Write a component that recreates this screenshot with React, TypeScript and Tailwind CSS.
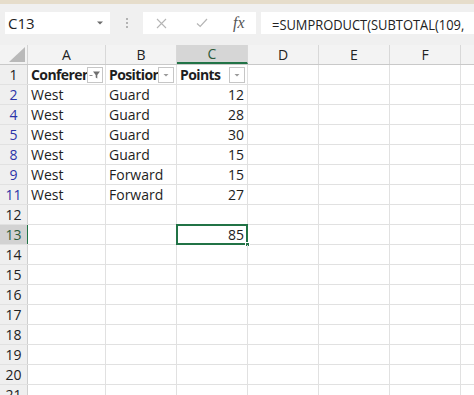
import React from "react";

const COLS = [
  { key: "A", w: 78 },
  { key: "B", w: 71 },
  { key: "C", w: 71 },
  { key: "D", w: 71 },
  { key: "E", w: 71 },
  { key: "F", w: 71 },
  { key: "G", w: 40 },
];

type Row = { n: number; filtered?: boolean; a?: string; b?: string; c?: string; sel?: boolean };

const ROWS: Row[] = [
  { n: 2, filtered: true, a: "West", b: "Guard", c: "12" },
  { n: 4, filtered: true, a: "West", b: "Guard", c: "28" },
  { n: 5, filtered: true, a: "West", b: "Guard", c: "30" },
  { n: 8, filtered: true, a: "West", b: "Guard", c: "15" },
  { n: 9, filtered: true, a: "West", b: "Forward", c: "15" },
  { n: 11, filtered: true, a: "West", b: "Forward", c: "27" },
  { n: 12 },
  { n: 13, c: "85", sel: true },
  { n: 14 },
  { n: 15 },
  { n: 16 },
  { n: 17 },
  { n: 18 },
  { n: 19 },
  { n: 20 },
  { n: 21 },
];

function DropBtn({ filter }: { filter?: boolean }) {
  return (
    <div className="w-[16px] h-[16px] shrink-0 mr-[2px] bg-white border border-[#c6c6c6] flex items-center justify-center">
      {filter ? (
        <svg width="12" height="10" viewBox="0 0 12 10">
          <path d="M0.5 5.5 L3.5 5.5" stroke="#8a8a8a" strokeWidth="1" />
          <path d="M4 1.5 L11 1.5 L8.3 5 L8.3 8.5 L6.7 7.5 L6.7 5 Z" fill="#6f6f6f" />
        </svg>
      ) : (
        <svg width="8" height="6" viewBox="0 0 8 6">
          <path d="M1.5 2 L6.5 2 L4 4.5 Z" fill="#9a9a9a" />
        </svg>
      )}
    </div>
  );
}

export default function App() {
  const font = { fontFamily: '"Open Sans", "Noto Sans", sans-serif' };
  return (
    <div className="w-[474px] h-[395px] overflow-hidden bg-white text-[#1e1e1e]" style={font}>
      {/* top strip */}
      <div className="h-[4px] bg-[#e6ddcb]" />
      {/* toolbar */}
      <div className="h-[41px] bg-[#f0f0f0] flex items-start pt-[8px] pl-[5px]">
        <div className="w-[105px] shrink-0 h-[22px] bg-white flex items-center pl-[3px] pr-[6px]">
          <span className="flex-1 text-[15px] leading-none text-[#222]">C13</span>
          <svg width="8" height="6" viewBox="0 0 8 6">
            <path d="M1 1.5 L7 1.5 L4 4.5 Z" fill="#6b6b6b" />
          </svg>
        </div>
        <div className="w-[33px] shrink-0 h-[22px] flex items-center justify-center">
          <div className="flex flex-col gap-[2px]">
            <div className="w-[2px] h-[2px] bg-[#b3b3b3]" />
            <div className="w-[2px] h-[2px] bg-[#b3b3b3]" />
            <div className="w-[2px] h-[2px] bg-[#b3b3b3]" />
          </div>
        </div>
        <div className="w-[113px] shrink-0 h-[22px] bg-white flex items-center">
          <svg className="ml-[13px]" width="11" height="11" viewBox="0 0 11 11">
            <path d="M1 1 L10 10 M10 1 L1 10" stroke="#b5b5b5" strokeWidth="1.1" />
          </svg>
          <svg className="ml-[29px]" width="12" height="10" viewBox="0 0 12 10">
            <path d="M1 5.5 L4.2 8.5 L11 1" stroke="#b5b5b5" strokeWidth="1.2" fill="none" />
          </svg>
          <span
            className="ml-[25px] text-[16px] leading-none italic text-[#555]"
            style={{ fontFamily: '"Liberation Serif", serif' }}
          >
            fx
          </span>
        </div>
        <div className="ml-[5px] flex-1 min-w-0 h-[22px] bg-white pl-[11px] overflow-hidden whitespace-nowrap">
          <span className="inline-block origin-left scale-x-[0.86] text-[15px] leading-[22px] text-[#222]">
            =SUMPRODUCT(SUBTOTAL(109,
          </span>
        </div>
      </div>
      {/* column header */}
      <div className="flex h-[20px] bg-[#f3f3f3] border-b border-[#c9c9c9]">
        <div className="w-[28px] shrink-0 border-r border-[#d4d4d4] flex items-end justify-end pr-[2px] pb-[2px]">
          <svg width="16" height="15" viewBox="0 0 16 15">
            <path d="M16 0 L16 15 L0 15 Z" fill="#b9b9b9" />
          </svg>
        </div>
        {COLS.map((c) => (
          <div
            key={c.key}
            style={{ width: c.w }}
            className={
              "shrink-0 border-r border-[#d8d8d8] flex items-center justify-center text-[14px] " +
              (c.key === "C" ? "bg-[#d6d6d6] border-b-2 border-b-[#217346] text-[#2d5b3a]" : "text-[#222]")
            }
          >
            {c.key !== "G" ? c.key : ""}
          </div>
        ))}
      </div>
      {/* header data row 1 */}
      <div className="flex h-[20px] border-b border-[#e1e1e1]">
        <div className="w-[28px] shrink-0 bg-[#efefef] border-r border-[#cfcfcf] flex items-center justify-center text-[14px] text-[#222]">
          1
        </div>
        <div className="w-[78px] shrink-0 border-r border-[#e1e1e1] flex items-center pl-[3px] font-bold tracking-[-0.6px] text-[14px]">
          <span className="flex-1 overflow-hidden whitespace-nowrap">Conference</span>
          <DropBtn filter />
        </div>
        <div className="w-[71px] shrink-0 border-r border-[#e1e1e1] flex items-center pl-[3px] font-bold tracking-[-0.6px] text-[14px]">
          <span className="flex-1 overflow-hidden whitespace-nowrap">Position</span>
          <DropBtn />
        </div>
        <div className="w-[71px] shrink-0 border-r border-[#e1e1e1] flex items-center pl-[3px] font-bold tracking-[-0.6px] text-[14px]">
          <span className="flex-1 overflow-hidden whitespace-nowrap">Points</span>
          <DropBtn />
        </div>
        {COLS.slice(3).map((c) => (
          <div key={c.key} style={{ width: c.w }} className="shrink-0 border-r border-[#e1e1e1]" />
        ))}
      </div>
      {ROWS.map((r) => (
        <div key={r.n} className="flex h-[20px] border-b border-[#e1e1e1]">
          <div
            className={
              "w-[28px] shrink-0 border-r flex items-center justify-center text-[14px] " +
              (r.sel
                ? "bg-[#d2d2d2] border-[#217346] text-[#2d5b3a]"
                : "bg-[#efefef] border-[#cfcfcf] " + (r.filtered ? "text-[#2b34a8]" : "text-[#222]"))
            }
          >
            {r.n}
          </div>
          <div className="w-[78px] shrink-0 border-r border-[#e1e1e1] flex items-center pl-[3px] text-[14px]">
            {r.a}
          </div>
          <div className="w-[71px] shrink-0 border-r border-[#e1e1e1] flex items-center pl-[3px] text-[14px]">
            {r.b}
          </div>
          <div className="w-[71px] shrink-0 border-r border-[#e1e1e1] relative flex items-center justify-end pr-[3px] text-[14px]">
            {r.c}
            {r.sel && (
              <>
                <div className="absolute left-[-1px] top-[-1px] right-[-1px] bottom-[-1px] border-2 border-[#217346]" />
                <div className="absolute right-[-3px] bottom-[-3px] w-[5px] h-[5px] bg-[#217346] border border-white" />
              </>
            )}
          </div>
          {COLS.slice(3).map((c) => (
            <div key={c.key} style={{ width: c.w }} className="shrink-0 border-r border-[#e1e1e1]" />
          ))}
        </div>
      ))}
    </div>
  );
}
